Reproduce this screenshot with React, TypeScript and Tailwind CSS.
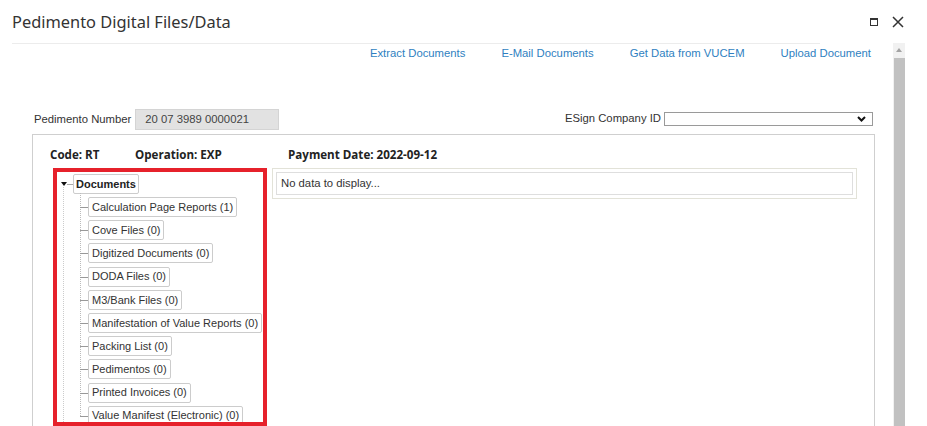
import React from "react";

const links = ["Extract Documents", "E-Mail Documents", "Get Data from VUCEM", "Upload Document"];

const docs = [
  "Calculation Page Reports (1)",
  "Cove Files (0)",
  "Digitized Documents (0)",
  "DODA Files (0)",
  "M3/Bank Files (0)",
  "Manifestation of Value Reports (0)",
  "Packing List (0)",
  "Pedimentos (0)",
  "Printed Invoices (0)",
  "Value Manifest (Electronic) (0)",
];

function MaximizeIcon() {
  return (
    <svg width="8" height="8" viewBox="0 0 8 8">
      <rect x="0.5" y="0.5" width="7" height="7" fill="none" stroke="#333" strokeWidth="1" />
      <rect x="0" y="0" width="8" height="2" fill="#333" />
    </svg>
  );
}

function CloseIcon() {
  return (
    <svg width="12" height="12" viewBox="0 0 12 12">
      <path d="M1 1 L11 11 M11 1 L1 11" stroke="#333" strokeWidth="1.5" fill="none" />
    </svg>
  );
}

function DocTree() {
  return (
    <div className="relative pl-[4px] pt-[2px]">
      {/* root node */}
      <div className="flex items-center h-[20px]">
        <svg width="6" height="5" viewBox="0 0 6 5">
          <path d="M0 0 L6 0 L3 4 Z" fill="#111" />
        </svg>
        <div className="w-[6px] h-px bg-[#aaa]" />
        <div className="h-[20px] px-[2px] flex items-center border border-[#ccc] rounded-[2px] text-[11px] font-bold text-[#222]">
          Documents
        </div>
      </div>
      {/* children */}
      <div className="relative pl-[27px] mt-[3px] flex flex-col gap-[3.2px]">
        <div className="absolute left-[2px] top-[-10px] bottom-0 border-l border-dotted border-[#ccc]" />
        <div className="absolute left-[19px] top-[-4px] bottom-[10px] border-l border-dotted border-[#bbb]" />
        {docs.map((d) => (
          <div key={d} className="relative flex items-center h-[20px]">
            <div className="absolute left-[-8px] top-[10px] w-[8px] h-px bg-[#999]" />
            <div className="h-[20px] px-[3px] flex items-center border border-[#ccc] rounded-[2px] text-[11px] text-[#333] whitespace-nowrap">
              {d}
            </div>
          </div>
        ))}
      </div>
    </div>
  );
}

export default function App() {
  return (
    <div
      className="w-[927px] h-[426px] overflow-hidden bg-white text-[#333]"
      style={{ fontFamily: '"Liberation Sans", Arial, sans-serif' }}
    >
      {/* dialog header */}
      <div className="h-[43px] flex items-center pl-[12px] pr-[23px]">
        <div className="flex-1 text-[16.4px] text-[#333] pt-[1px]" style={{ fontFamily: '"Noto Sans", "Open Sans", sans-serif' }}>
          Pedimento Digital Files/Data
        </div>
        <div className="flex items-center gap-[14px]">
          <MaximizeIcon />
          <CloseIcon />
        </div>
      </div>

      <div className="flex">
        {/* scrollable content */}
        <div className="w-[893px]">
          <div className="ml-[12px] w-[808px] h-px bg-[#ececec]" />
          <div className="h-[19px] flex items-center justify-end gap-[36px] pr-[22px] text-[11.3px] text-[#2f7fc1]">
            {links.map((l) => (
              <span key={l}>{l}</span>
            ))}
          </div>

          <div className="mt-[46px] h-[21px] flex items-center pl-[34px] pr-[20px] text-[11.3px] text-[#333]">
            <span>Pedimento Number</span>
            <div className="ml-[4px] w-[144px] h-[21px] flex items-center pl-[9px] bg-[#e2e2e2] border border-[#d4d4d4] text-[#444]">
              20 07 3989 0000021
            </div>
            <div className="flex-1" />
            <span className="mt-[-2px]">ESign Company ID</span>
            <div className="ml-[3px] mt-[-2px] w-[209px] h-[14px] border border-[#9a9a9a] bg-white flex items-center justify-end pr-[6px]">
              <svg width="9" height="6" viewBox="0 0 9 6">
                <path d="M1 1 L4.5 4.5 L8 1" stroke="#111" strokeWidth="2" fill="none" />
              </svg>
            </div>
          </div>

          {/* details panel */}
          <div className="mt-[4px] ml-[32px] w-[843px] h-[300px] border border-[#cfcfcf] pt-[12px]">
            <div className="h-[16px] flex items-center pl-[17px] text-[11.6px] font-bold text-[#222]" style={{ fontFamily: '"Open Sans", "Noto Sans", sans-serif' }}>
              <span className="w-[85px]">Code: RT</span>
              <span className="w-[153px]">Operation: EXP</span>
              <span>Payment Date: 2022-09-12</span>
            </div>
            <div className="mt-[5px] flex pl-[20px] pr-[17px] gap-[5px]">
              <div className="w-[214px] h-[258px] overflow-hidden border-[4px] border-[#e6212b]">
                <DocTree />
              </div>
              <div className="flex-1 self-start border border-[#e2e2d8] p-[3px] bg-white">
                <div className="h-[23px] flex items-center pl-[4px] border border-[#dedede] text-[11.3px] text-[#333]">
                  No data to display...
                </div>
              </div>
            </div>
          </div>
        </div>

        {/* scrollbar */}
        <div className="w-[12px] h-[383px] bg-[#f1f1f1] flex flex-col items-center">
          <svg width="6" height="4" viewBox="0 0 6 4" className="mt-[5px]">
            <path d="M0 4 L3 0 L6 4 Z" fill="#a3a3a3" />
          </svg>
          <div className="mt-[6px] w-[11px] flex-1 bg-[#c1c1c1]" />
        </div>
      </div>
    </div>
  );
}
